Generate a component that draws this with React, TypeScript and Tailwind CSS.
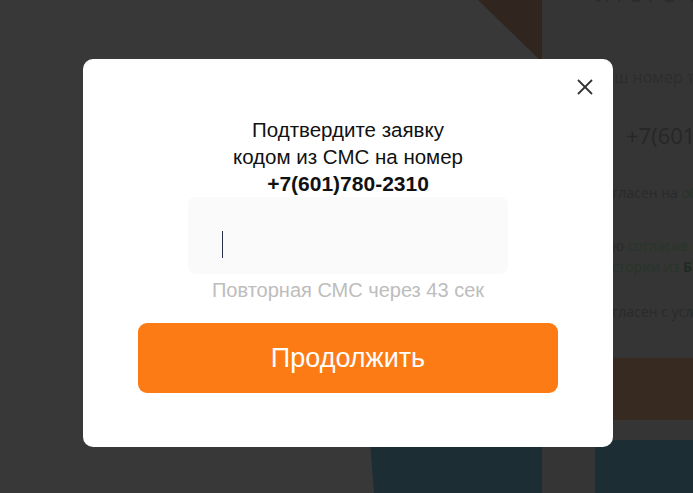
const modalFont = { fontFamily: '"Liberation Sans", Arial, sans-serif' };

function BackgroundPage() {
  return (
    <div className="flex h-[493px] w-full overflow-hidden bg-[#383838]">
      {/* left side with illustration pieces */}
      <div className="relative w-[542px] shrink-0">
        <svg className="absolute right-0 top-0" width="64" height="62" viewBox="0 0 64 62">
          <polygon points="0,0 64,0 64,62" fill="#30251f" />
        </svg>
        <svg className="absolute bottom-0 right-0" width="174" height="80" viewBox="0 0 174 80">
          <polygon points="0,0 174,0 174,80 6,80" fill="#1c2d33" />
        </svg>
      </div>

      {/* right side: order summary */}
      <div
        className="flex flex-1 flex-col bg-[#353535] pl-[53px] text-[#2a2a2a]"
        style={{ fontFamily: '"Open Sans", sans-serif' }}
      >
        <div className="-mt-[17px] whitespace-nowrap text-[20px] uppercase leading-[24px] tracking-[0.18em]">
          Итого к оплате
        </div>
        <div className="mt-[59px] whitespace-nowrap text-[16px] leading-[22px] text-[#2d2d2d]">Ваш номер телефона</div>
        <div className="mt-[32px] whitespace-nowrap pl-[31px] text-[22px] leading-[30px] text-[#272727]">+7(601)780-2310</div>
        <div className="mt-[33px] whitespace-nowrap text-[14px] leading-[20px]">
          Согласен на <span className="text-[#27352a]">обработку данных</span>
        </div>
        <div className="mt-[32px] whitespace-nowrap text-[14px] leading-[21px]">
          Даю <span className="text-[#27352a]">согласие на запрос</span>
          <br />
          <span className="ml-[8px] text-[#27352a]">
            истории из <b className="font-bold text-[#1f2c22]">БКИ</b>
          </span>
        </div>
        <div className="mt-[25px] whitespace-nowrap text-[14px] leading-[20px]">Согласен с условиями</div>
        <div className="-ml-[53px] mt-[36px] h-[70px] bg-[#372a20]" />
        <div className="mt-[20px] h-[60px] rounded-tl-[10px] bg-[#1c2d33]" />
      </div>
    </div>
  );
}

function SmsModal() {
  return (
    <div className="fixed inset-0 flex items-start justify-center pl-[3px] pt-[59px]">
      <div
        className="relative flex h-[388px] w-[530px] flex-col items-center rounded-[10px] bg-white pt-[57px]"
        style={modalFont}
      >
        <button className="absolute right-[20px] top-[20px] text-[#333]">
          <svg width="16" height="16" viewBox="0 0 16 16" fill="none" stroke="currentColor" strokeWidth="1.8">
            <line x1="1" y1="1" x2="15" y2="15" />
            <line x1="15" y1="1" x2="1" y2="15" />
          </svg>
        </button>

        <p className="text-center text-[20.5px] leading-[27px] text-[#111]">
          Подтвердите заявку
          <br />
          кодом из СМС на номер
        </p>
        <p className="text-center text-[21px] font-bold leading-[28px] text-[#111]">+7(601)780-2310</p>

        <div className="mt-[-1px] h-[77px] w-[320px] rounded-[8px] bg-[#fafafa] pl-[34px] pt-[34px]">
          <div className="h-[27px] w-px bg-[#2b2e48]" />
        </div>

        <p className="text-[20px] leading-[32px] text-[#bdbdbd]">Повторная СМС через 43 сек</p>

        <button className="mt-[17px] h-[70px] w-[420px] rounded-[9px] bg-[#fd7b15] text-[27px] text-white">
          Продолжить
        </button>
      </div>
    </div>
  );
}

export default function App() {
  return (
    <main className="relative min-h-[493px] w-full">
      <BackgroundPage />
      <SmsModal />
    </main>
  );
}
